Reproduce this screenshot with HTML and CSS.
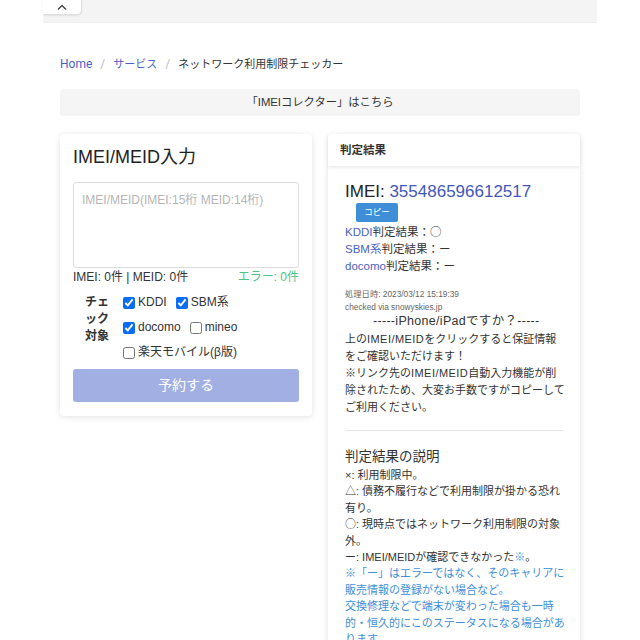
FILE: index.html
```html
<!DOCTYPE html>
<html lang="ja">
<head>
<meta charset="utf-8">
<link rel="stylesheet" href="styles.css">
</head>
<body>
<div class="topbar">
  <div class="tab"><svg width="12" height="8" viewBox="0 0 12 8"><path d="M2 6.5 L6 2.5 L10 6.5" fill="none" stroke="#444" stroke-width="1.4"/></svg></div>
</div>
<main class="container">
  <nav class="crumbs">
    <a class="link">Home</a><span class="sep">/</span><a class="link">サービス</a><span class="sep">/</span><span class="current">ネットワーク利用制限チェッカー</span>
  </nav>
  <div class="notice">「IMEIコレクター」はこちら</div>
  <div class="cols">
    <section class="card left">
      <h2 class="title">IMEI/MEID入力</h2>
      <div class="textarea">IMEI/MEID(IMEI:15桁 MEID:14桁)</div>
      <div class="counts"><span>IMEI: 0件 | MEID: 0件</span><span class="err">エラー: 0件</span></div>
      <div class="checks">
        <div class="checks-label">チェック対象</div>
        <div class="options">
          <div class="opt-row"><label class="opt"><input type="checkbox" checked>KDDI</label><label class="opt"><input type="checkbox" checked>SBM系</label></div>
          <div class="opt-row"><label class="opt"><input type="checkbox" checked>docomo</label><label class="opt"><input type="checkbox">mineo</label></div>
          <div class="opt-row"><label class="opt"><input type="checkbox">楽天モバイル(β版)</label></div>
        </div>
      </div>
      <div class="btn">予約する</div>
    </section>
    <section class="card right">
      <div class="card-head">判定結果</div>
      <div class="card-body">
        <div class="imei">IMEI: <span class="num">355486596612517</span></div>
        <div class="copy">コピー</div>
        <div class="results">
          <div class="line"><span class="link">KDDI</span>判定結果：<span class="sym">○</span></div>
          <div class="line"><span class="link">SBM系</span>判定結果：ー</div>
          <div class="line"><span class="link">docomo</span>判定結果：ー</div>
        </div>
        <div class="meta">処理日時: 2023/03/12 15:19:39<br>checked via snowyskies.jp</div>
        <div class="iphone">-----iPhone/iPadですか？-----</div>
        <p class="para first">上の<span class="wide">IMEI/MEID</span>をクリックすると保証情報をご確認いただけます！<br>※リンク先の<span class="wide">IMEI/MEID</span>自動入力機能が削除されたため、大変お手数ですがコピーしてご利用ください。</p>
        <hr class="rule">
        <h3 class="sub">判定結果の説明</h3>
        <p class="para expl">×: 利用制限中。<br><span class="sym">△</span>: 債務不履行などで利用制限が掛かる恐れ有り。<br><span class="sym">○</span>: 現時点ではネットワーク利用制限の対象外。<br>ー: IMEI/MEIDが確認できなかった<span class="lb">※</span>。<br><span class="lb">※「ー」はエラーではなく、そのキャリアに販売情報の登録がない場合など。<br>交換修理などで端末が変わった場合も一時的・恒久的にこのステータスになる場合があります。</span></p>
      </div>
    </section>
  </div>
</main>
</body>
</html>
```
FILE: styles.css
```css
* { box-sizing: border-box; }
html, body { margin: 0; padding: 0; background: #fff; }
body {
  font-family: "Liberation Sans", "Noto Sans CJK JP", sans-serif;
  font-size: 12px;
  color: #333;
  height: 640px;
  overflow: hidden;
}
.topbar {
  margin: 0 43px;
  height: 23px;
  background: #f4f4f4;
  border-bottom: 1px solid #eee;
}
.tab {
  width: 39px;
  height: 15px;
  background: #fff;
  border-right: 1px solid #ddd;
  border-bottom: 1px solid #ddd;
  border-bottom-right-radius: 5px;
  box-shadow: 0 1px 2px rgba(0,0,0,0.08);
  display: flex;
  align-items: center;
  justify-content: center;
}
.container { padding: 0 60px; }
.crumbs {
  margin-top: 33px;
  height: 17px;
  line-height: 17px;
  font-size: 11px;
  font-family: Roboto, "Noto Sans CJK JP", sans-serif;
}
.crumbs .link { font-size: 12px; }
.crumbs .link + .sep + .link { font-size: 11px; }
.link { color: #4a62c4; }
.sep { color: #bbb; padding: 0 8px; font-size: 12px; }
.current { color: #333; }
.notice {
  margin-top: 16px;
  height: 27px;
  line-height: 27px;
  background: #f5f5f5;
  border-radius: 4px;
  text-align: center;
  font-size: 11.3px;
  color: #333;
}
.cols {
  margin-top: 18px;
  display: grid;
  grid-template-columns: 1fr 1fr;
  gap: 16px;
  align-items: start;
}
.card {
  background: #fff;
  border-radius: 4px;
  box-shadow: 0 1px 6px rgba(0,0,0,0.12);
}
.left { padding: 12px 13px 14px; }
.title {
  margin: 0;
  font-weight: normal;
  font-size: 18px;
  line-height: 22px;
  color: #222;
}
.textarea {
  margin-top: 14px;
  height: 86px;
  border: 1px solid #ddd;
  border-radius: 3px;
  padding: 7px 8px;
  color: #b5b5b5;
  font-size: 12px;
}
.counts {
  display: flex;
  justify-content: space-between;
  line-height: 17px;
  margin-top: 1px;
}
.err { color: #4cc386; }
.checks {
  display: flex;
  margin-top: 8px;
}
.checks-label {
  width: 26px;
  margin-left: 11px;
  margin-right: 13px;
  line-height: 17px;
  font-weight: bold;
  text-align: center;
  word-break: break-all;
  color: #333;
}
.options { display: flex; flex-direction: column; gap: 8px; }
.opt-row { display: flex; gap: 9px; height: 17px; align-items: center; }
.opt {
  display: flex;
  align-items: center;
  gap: 3px;
  line-height: 17px;
  color: #333;
}
.opt input {
  margin: 0;
  width: 12px;
  height: 12px;
  accent-color: #0a6cf5;
}
.btn {
  margin-top: 8px;
  height: 33px;
  line-height: 33px;
  background: #a2afe2;
  border-radius: 3px;
  text-align: center;
  color: #fff;
  font-size: 14px;
}
.card-head {
  height: 32px;
  line-height: 32px;
  padding: 0 12px;
  font-size: 11.5px;
  font-weight: bold;
  color: #333;
  box-shadow: 0 2px 3px rgba(0,0,0,0.07);
}
.card-body { padding: 16px 12px 0 17px; font-size: 11px; }
.imei {
  font-size: 17px;
  line-height: 20px;
  color: #222;
}
.num { color: #4357b8; }
.copy {
  margin-left: 11px;
  margin-top: 1px;
  width: 42px;
  height: 19px;
  line-height: 19px;
  background: #3e8fd8;
  color: #fff;
  font-size: 8.5px;
  text-align: center;
  border-radius: 2px;
}
.results { padding-top: 2px; }
.line { line-height: 17px; font-size: 11.5px; }
.line .link { font-size: 11.5px; }
.sym { font-family: "Noto Sans CJK JP", sans-serif; line-height: 10px; }
.meta {
  margin-top: 13px;
  font-size: 8.3px;
  line-height: 13px;
  color: #666;
}
.iphone {
  line-height: 15px;
  padding-left: 28px;
  font-size: 12.5px;
  letter-spacing: 0.3px;
}
.para {
  margin: 2px 0 0;
  line-height: 17px;
}
.first { margin-right: 2px; }
.wide { letter-spacing: 0.45px; }
.expl { line-height: 16.4px; }
.rule {
  margin: 14px 5px 0 0;
  border: 0;
  border-top: 1px solid #e6e6e6;
}
.sub {
  margin: 16px 0 0;
  font-size: 13.5px;
  font-weight: normal;
  line-height: 20px;
  color: #333;
}
.sub + .para { margin-top: 0; }
.lb { color: #3e8fd8; }
```
